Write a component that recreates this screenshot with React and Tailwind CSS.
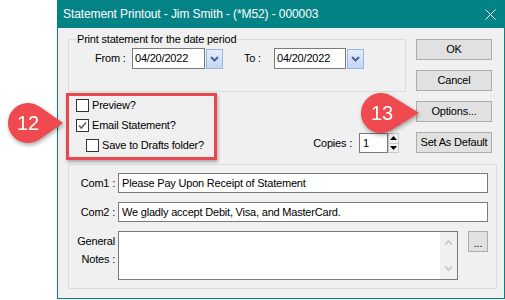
import React from 'react';

function Btn({ children }) {
  return (
    <button type="button" className="flex h-[21px] w-[76px] items-center justify-center border border-[#adadad] bg-[#e1e1e1]">
      {children}
    </button>
  );
}

function DateBox({ value, width }) {
  return (
    <div className="flex items-center">
      <div className={`flex h-[21px] items-center border border-[#7a7a7a] bg-white pl-[2px] ${width}`}>{value}</div>
      <div className="ml-px flex h-[20px] w-[17px] items-center justify-center border border-[#9db5dc] bg-gradient-to-b from-[#e6eefc] to-[#c3d5f4]">
        <svg width="9" height="6" viewBox="0 0 9 6">
          <path d="M1 1 L4.5 4.5 L8 1" fill="none" stroke="#4a6390" strokeWidth="2" />
        </svg>
      </div>
    </div>
  );
}

function Check({ checked, label }) {
  return (
    <div className="flex h-[20px] items-start">
      <div className="flex h-[13px] w-[13px] items-center justify-center border border-[#333] bg-white">
        {checked && (
          <svg width="11" height="11" viewBox="0 0 11 11">
            <path d="M2 5.5 L4.3 8 L9 2.5" fill="none" stroke="#5c5c5c" strokeWidth="1.5" />
          </svg>
        )}
      </div>
      <span className="ml-[3px] leading-[13px]">{label}</span>
    </div>
  );
}

function Callout({ num, className, cx, tipX, t1x, t1y, t2y }) {
  return (
    <svg className={`absolute drop-shadow-[1px_2px_2px_rgba(0,0,0,0.35)] ${className}`} width="70" height="56" viewBox="0 0 70 56">
      <path d={`M${tipX} 25 L${t1x} ${t2y} A20 20 0 1 1 ${t1x} ${t1y} Z`} fill="#ee4a4f" />
      <text x={cx} y="32" textAnchor="middle" fontSize="20" fill="#fff" fontFamily="Liberation Sans, Arial, sans-serif">{num}</text>
    </svg>
  );
}

export default function App() {
  return (
    <div className="relative h-[300px] w-[505px] overflow-hidden bg-white font-['Liberation_Sans',Arial,sans-serif]">
      <div className="ml-[57px] flex h-[299px] w-[448px] flex-col border-x border-b border-[#048387] bg-[#048387]">
        <div className="flex h-[28px] shrink-0 items-center justify-between pl-[5px] pr-[8px] text-[12px] tracking-[-0.1px] text-white">
          <span>Statement Printout - Jim Smith - (*M52) - 000003</span>
          <svg width="11" height="11" viewBox="0 0 11 11">
            <path d="M0.5 0.5 L10.5 10.5 M10.5 0.5 L0.5 10.5" stroke="#fff" strokeWidth="1" />
          </svg>
        </div>

        <div className="flex-1 bg-[#f0f0f0] pl-[10px] pt-[11px] text-[11px] tracking-[-0.2px] text-black">
          <div className="flex">
            <div className="flex w-[338px] flex-col">
              <div className="relative h-[53px] border border-[#dcdcdc]">
                <span className="absolute left-[7px] top-[-7px] bg-[#f0f0f0] px-px leading-[13px]">Print statement for the date period</span>
                <div className="mt-[8px] flex items-center pl-[26px]">
                  <span className="w-[37px]">From :</span>
                  <DateBox value="04/20/2022" width="w-[73px]" />
                  <span className="ml-[21px] w-[30px]">To :</span>
                  <DateBox value="04/20/2022" width="w-[72px]" />
                </div>
              </div>

              <div className="flex items-end justify-between">
                <div className="pl-[8px] pt-[7px]">
                  <Check label="Preview?" />
                  <Check checked label="Email Statement?" />
                  <div className="pl-[10px]">
                    <Check label="Save to Drafts folder?" />
                  </div>
                </div>
                <div className="mb-[6px] mr-[7px] flex items-center">
                  <span>Copies :</span>
                  <div className="ml-[7px] flex h-[20px] w-[29px] items-center border border-[#7a7a7a] bg-white pl-[3px]">1</div>
                  <div className="flex h-[20px] w-[11px] flex-col">
                    <div className="flex flex-1 items-center justify-center border border-[#c8c8c8] bg-[#f0f0f0]">
                      <svg width="7" height="4" viewBox="0 0 7 4"><path d="M0 4 L3.5 0 L7 4 Z" fill="#000" /></svg>
                    </div>
                    <div className="flex flex-1 items-center justify-center border border-t-0 border-[#c8c8c8] bg-[#f0f0f0]">
                      <svg width="7" height="4" viewBox="0 0 7 4"><path d="M0 0 L3.5 4 L7 0 Z" fill="#000" /></svg>
                    </div>
                  </div>
                </div>
              </div>
            </div>

            <div className="ml-[10px] flex flex-col gap-[10px]">
              <Btn>OK</Btn>
              <Btn>Cancel</Btn>
              <Btn>Options...</Btn>
              <Btn>Set As Default</Btn>
            </div>
          </div>

          <div className="mt-[5px] flex h-[125px] w-[429px] flex-col gap-[9px] border border-[#dcdcdc] pt-[8px]">
            <div className="flex items-center">
              <span className="w-[46px] text-right">Com1 :</span>
              <div className="ml-[3px] flex h-[20px] w-[370px] items-center border border-[#7a7a7a] bg-white pl-[3px]">Please Pay Upon Receipt of Statement</div>
            </div>
            <div className="flex items-center">
              <span className="w-[46px] text-right">Com2 :</span>
              <div className="ml-[3px] flex h-[20px] w-[370px] items-center border border-[#7a7a7a] bg-white pl-[3px]">We gladly accept Debit, Visa, and MasterCard.</div>
            </div>
            <div className="flex items-start">
              <span className="w-[46px] pt-px text-right leading-[18px]">General<br />Notes :</span>
              <div className="ml-[3px] flex h-[49px] w-[340px] justify-end border border-[#7a7a7a] bg-white">
                <div className="flex w-[17px] flex-col items-center justify-between bg-[#f0f0f0] py-[8px]">
                  <svg width="9" height="5" viewBox="0 0 9 5"><path d="M1 4.5 L4.5 1 L8 4.5" fill="none" stroke="#c2c2c2" strokeWidth="1.5" /></svg>
                  <svg width="9" height="5" viewBox="0 0 9 5"><path d="M1 0.5 L4.5 4 L8 0.5" fill="none" stroke="#c2c2c2" strokeWidth="1.5" /></svg>
                </div>
              </div>
              <button type="button" className="ml-[10px] flex h-[21px] w-[20px] items-center justify-center border border-[#adadad] bg-[#e1e1e1] pt-[3px]">...</button>
            </div>
          </div>
        </div>
      </div>

      <div className="absolute left-[66px] top-[93px] h-[67px] w-[151px] border-[3px] border-[#e8484d] shadow-[1px_2px_3px_rgba(0,0,0,0.3)]" />
      <Callout num="12" className="left-0 top-[98px]" cx={28} tipX={63} t1x={39.43} t1y={8.59} t2y={41.41} />
      <Callout num="13" className="left-[355px] top-[88px]" cx={27} tipX={64} t1x={36.53} t1y={8} t2y={42} />
    </div>
  );
}
